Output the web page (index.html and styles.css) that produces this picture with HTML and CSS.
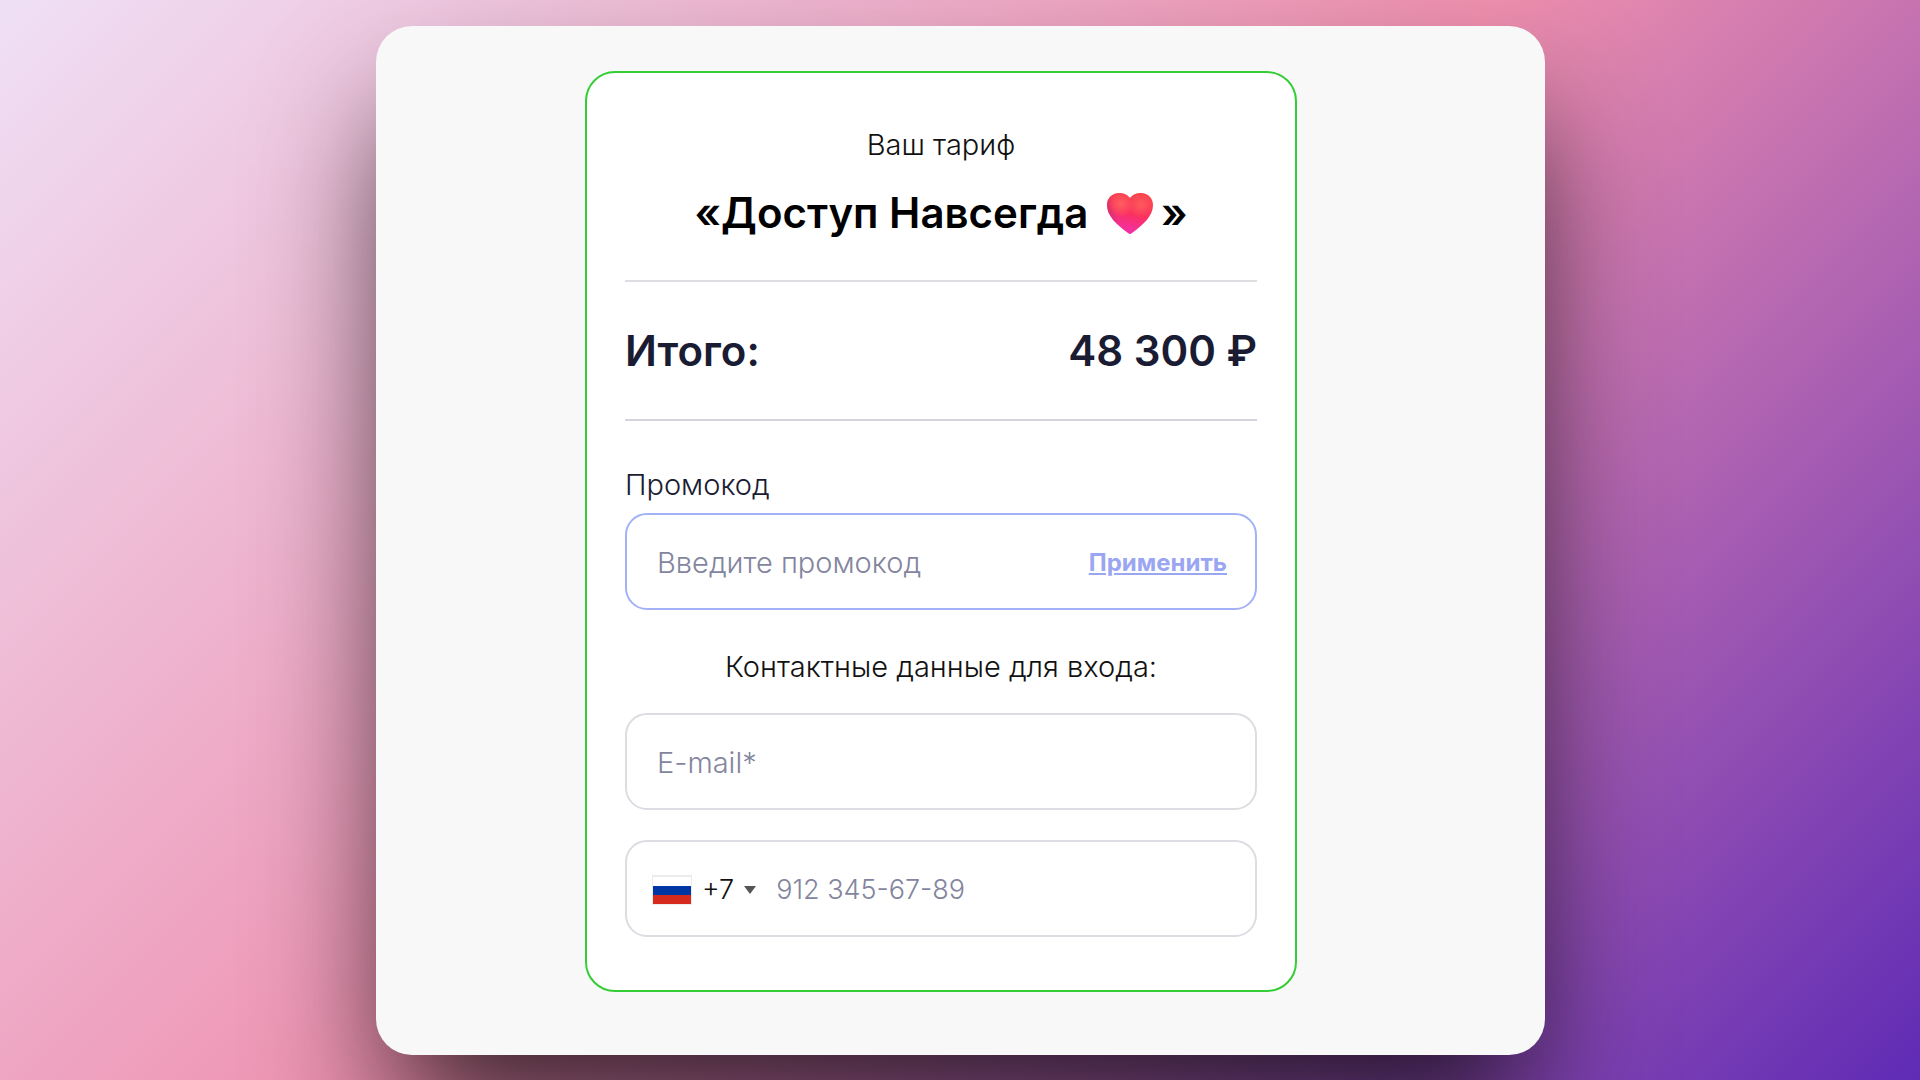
FILE: index.html
```html
<!DOCTYPE html>
<html lang="ru">
<head>
<meta charset="utf-8">
<meta name="viewport" content="width=device-width, initial-scale=1">
<title>Оплата тарифа</title>
<link rel="stylesheet" href="styles.css">
</head>
<body>
<main class="panel">
  <form class="card">
    <header class="plan">
      <p class="plan-label">Ваш тариф</p>
      <h1 class="plan-name">«Доступ Навсегда
        <svg class="heart" viewBox="0 0 46 42" aria-hidden="true">
          <defs>
            <linearGradient id="heart-base" x1="0.65" y1="0" x2="0.4" y2="1">
              <stop offset="0" stop-color="#f8424a"/>
              <stop offset="0.5" stop-color="#fb305f"/>
              <stop offset="1" stop-color="#f02fb0"/>
            </linearGradient>
            <radialGradient id="heart-shine" gradientUnits="userSpaceOnUse" cx="14" cy="12" r="13">
              <stop offset="0" stop-color="#ff5f62"/>
              <stop offset="1" stop-color="#ff5f62" stop-opacity="0"/>
            </radialGradient>
            <radialGradient id="heart-shine-right" gradientUnits="userSpaceOnUse" cx="34" cy="13" r="13">
              <stop offset="0" stop-color="#ff5a5e"/>
              <stop offset="1" stop-color="#ff5a5e" stop-opacity="0"/>
            </radialGradient>
            <linearGradient id="heart-edge" x1="0" y1="0.5" x2="0.4" y2="0.4">
              <stop offset="0" stop-color="#c02f78" stop-opacity="0.7"/>
              <stop offset="0.5" stop-color="#c02f78" stop-opacity="0"/>
            </linearGradient>
            <path id="heart-shape" d="M23 6C20 2 16 1 12 1C5 1 0 6 0 13C0 24 10 33 21 41Q23 43 25 41C36 33 46 24 46 13C46 6 41 1 34 1C30 1 26 2 23 6Z"/>
          </defs>
          <use href="#heart-shape" fill="url(#heart-base)"/>
          <use href="#heart-shape" fill="url(#heart-edge)"/>
          <use href="#heart-shape" fill="url(#heart-shine)"/>
          <use href="#heart-shape" fill="url(#heart-shine-right)"/>
        </svg>»</h1>
    </header>

    <div class="total">
      <span>Итого:</span>
      <span>48 300 ₽</span>
    </div>

    <label class="field-label" for="promo">Промокод</label>
    <div class="field field-active">
      <input class="field-input" id="promo" type="text" placeholder="Введите промокод">
      <button class="apply" type="button">Применить</button>
    </div>

    <h2 class="contacts-title">Контактные данные для входа:</h2>
    <div class="field">
      <input class="field-input" type="email" placeholder="E-mail*" aria-label="E-mail">
    </div>
    <div class="field field-phone">
      <button class="country" type="button" aria-label="Код страны: Россия, +7">
        <svg class="flag" viewBox="0 0 40 30" aria-hidden="true">
          <path fill="#ececec" d="M0 0h40v30H0z"/>
          <path fill="#fff" d="M1 2h38v9H1z"/>
          <path fill="#0035a4" d="M1 11h38v9H1z"/>
          <path fill="#d62a1e" d="M1 20h38v9H1z"/>
        </svg>
        <span>+7</span>
        <svg class="caret" viewBox="0 0 12 8" aria-hidden="true"><path fill="#555" d="M0 0h12L6 8z"/></svg>
      </button>
      <input class="field-input" type="tel" placeholder="912 345-67-89" aria-label="Телефон">
    </div>
  </form>
</main>
</body>
</html>
```
FILE: styles.css
```css
* { box-sizing: border-box; }

body {
  margin: 0;
  min-height: 100vh;
  padding: 26px 20px;
  overflow-x: hidden;
  background: linear-gradient(135deg, #efe0f6 0%, #ee8fae 50%, #5f2bb5 100%);
  color: #111;
  font: 300 29px/36px Inter, "Open Sans", sans-serif;
}

h1, h2, p { margin: 0; font-weight: inherit; }
h2 { font-size: inherit; }

.panel {
  width: 100%;
  max-width: 1169px;
  margin: 0 auto;
  padding: 45px 38px 63px 0;
  border-radius: 36px;
  background: #f8f8f8;
  box-shadow: 0 76px 130px -16px rgba(0, 0, 0, 0.76);
}

.card {
  width: 100%;
  max-width: 712px;
  margin: 0 auto;
  padding: 54px 38px 53px;
  border: 2px solid #35cd35;
  border-radius: 30px;
  background: #fff;
}

.plan {
  padding-bottom: 41px;
  border-bottom: 2px solid #dddde2;
  text-align: center;
}

.plan-name {
  margin-top: 24px;
  font-size: 42px;
  font-weight: 600;
  line-height: 52px;
  color: #000;
}

.heart {
  width: 46px;
  height: 42px;
  margin: 0 8px;
  vertical-align: -6px;
}

.total {
  display: flex;
  justify-content: space-between;
  padding: 43px 0 42px;
  border-bottom: 2px solid #d4d4dc;
  color: #1a1c33;
  font-size: 42px;
  font-weight: 600;
  line-height: 52px;
}

.field-label {
  display: block;
  margin: 46px 0 10px;
  color: #1a1c33;
}

.field {
  display: flex;
  align-items: center;
  gap: 20px;
  height: 97px;
  padding: 2px 28px 0 30px;
  border: 2px solid #dcdce2;
  border-radius: 22px;
}

.field-active { border-color: #a3b1f6; }

.field-input {
  flex: 1;
  min-width: 0;
  padding: 0;
  border: 0;
  outline: 0;
  background: none;
  color: #1a1c33;
  font: inherit;
}

.field-input::placeholder { color: #83859e; opacity: 1; }

.apply, .country {
  padding: 0;
  border: 0;
  background: none;
  font: inherit;
  cursor: pointer;
}

.apply {
  color: #9ba6f3;
  font-size: 24px;
  font-weight: 700;
  text-decoration: underline;
}

.contacts-title { margin: 39px 0 28px; text-align: center; }

.field-phone {
  margin-top: 30px;
  padding-left: 25px;
  font-size: 27px;
}

.country {
  display: flex;
  align-items: center;
  gap: 10px;
  color: #111;
}

.flag { width: 40px; height: 30px; }
.caret { width: 12px; height: 8px; }
```
